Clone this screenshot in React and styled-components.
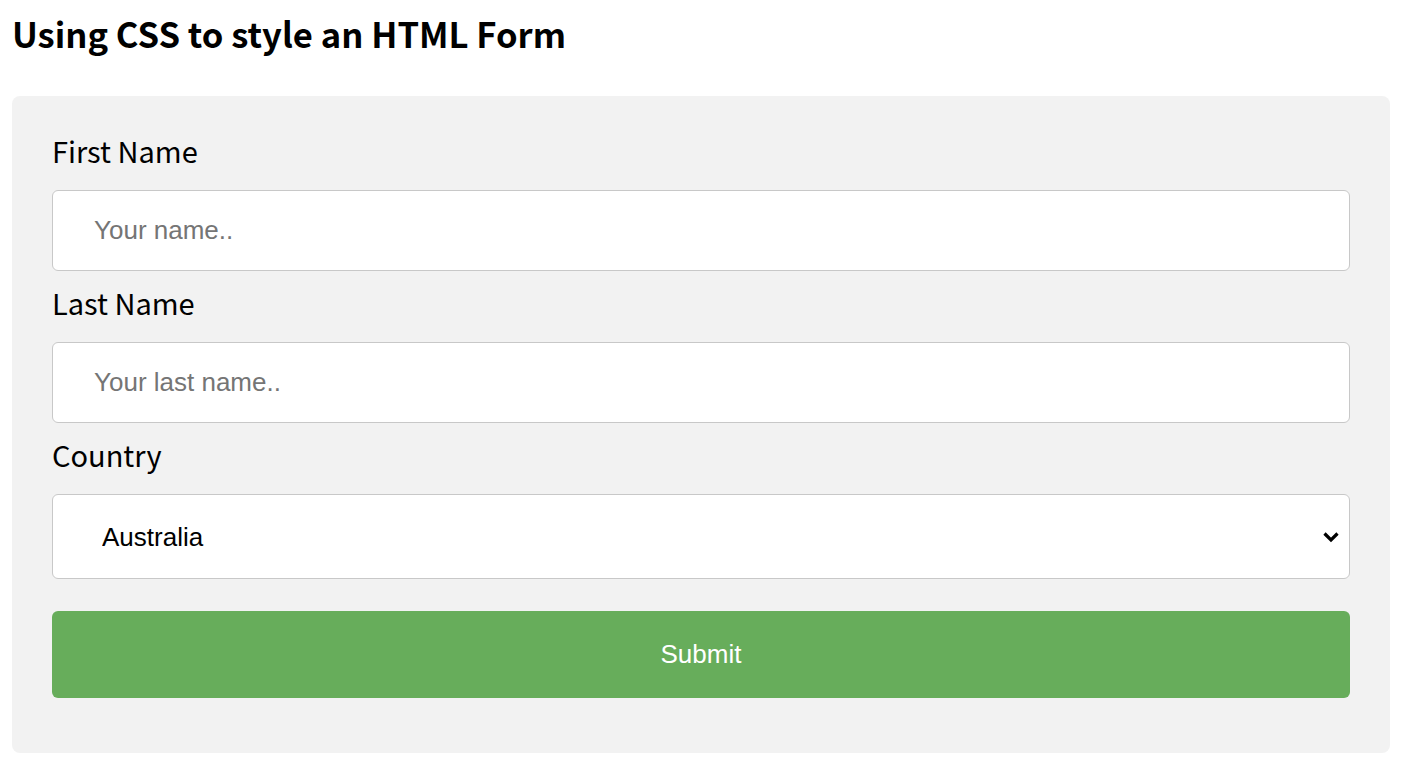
import React from 'react';
import styled, { createGlobalStyle } from 'styled-components';

const GlobalStyle = createGlobalStyle`
  * {
    box-sizing: border-box;
  }
  body {
    margin: 0;
    background: #fff;
    font-family: "Noto Sans CJK KR", "Noto Sans", sans-serif;
  }
`;

const Page = styled.div`
  padding: 0 14px 0 12px;
`;

const Title = styled.h3`
  margin: 0;
  height: 96px;
  padding-top: 11px;
  font-size: 34.6px;
  line-height: 44px;
  font-weight: 700;
  color: #000;
`;

const Card = styled.div`
  background-color: #f2f2f2;
  border-radius: 8px;
  padding: 23px 40px 55px;
`;

const Label = styled.label`
  display: block;
  height: 71px;
  padding-top: 11px;
  font-size: 29px;
  line-height: 40px;
  color: #000;
`;

const Input = styled.input`
  display: block;
  width: 100%;
  height: 81px;
  padding: 0 41px;
  border: 1.5px solid #c8c8c8;
  border-radius: 6px;
  background: #fff;
  font-family: "Liberation Sans", Arial, sans-serif;
  font-size: 26px;
  color: #000;
  outline: none;
  &::placeholder {
    color: #757575;
  }
`;

const SelectWrap = styled.div`
  position: relative;
`;

const Select = styled.select`
  display: block;
  width: 100%;
  height: 85px;
  padding: 0 41px 0 49px;
  border: 1.5px solid #c8c8c8;
  border-radius: 6px;
  background: #fff;
  appearance: none;
  font-family: "Liberation Sans", Arial, sans-serif;
  font-size: 26px;
  color: #000;
  outline: none;
`;

const Chevron = styled.svg`
  position: absolute;
  right: 10px;
  top: 36px;
  pointer-events: none;
`;

const SubmitButton = styled.button`
  display: block;
  width: 100%;
  height: 87px;
  margin-top: 32px;
  border: none;
  border-radius: 6px;
  background-color: #67ad5b;
  color: #fff;
  font-family: "Liberation Sans", Arial, sans-serif;
  font-size: 26px;
  cursor: pointer;
`;

const App = () => {
  return (
    <Page>
      <GlobalStyle />
      <Title>Using CSS to style an HTML Form</Title>
      <Card>
        <form onSubmit={(e) => e.preventDefault()}>
          <Label htmlFor="fname">First Name</Label>
          <Input id="fname" type="text" placeholder="Your name.." />
          <Label htmlFor="lname">Last Name</Label>
          <Input id="lname" type="text" placeholder="Your last name.." />
          <Label htmlFor="country">Country</Label>
          <SelectWrap>
            <Select id="country" defaultValue="australia">
              <option value="australia">Australia</option>
              <option value="canada">Canada</option>
              <option value="usa">USA</option>
            </Select>
            <Chevron width="18" height="14" viewBox="0 0 18 14">
              <path d="M2.5 3.5 L9 10 L15.5 3.5" fill="none" stroke="#000" strokeWidth="3.2" />
            </Chevron>
          </SelectWrap>
          <SubmitButton type="submit">Submit</SubmitButton>
        </form>
      </Card>
    </Page>
  );
};

export default App;
